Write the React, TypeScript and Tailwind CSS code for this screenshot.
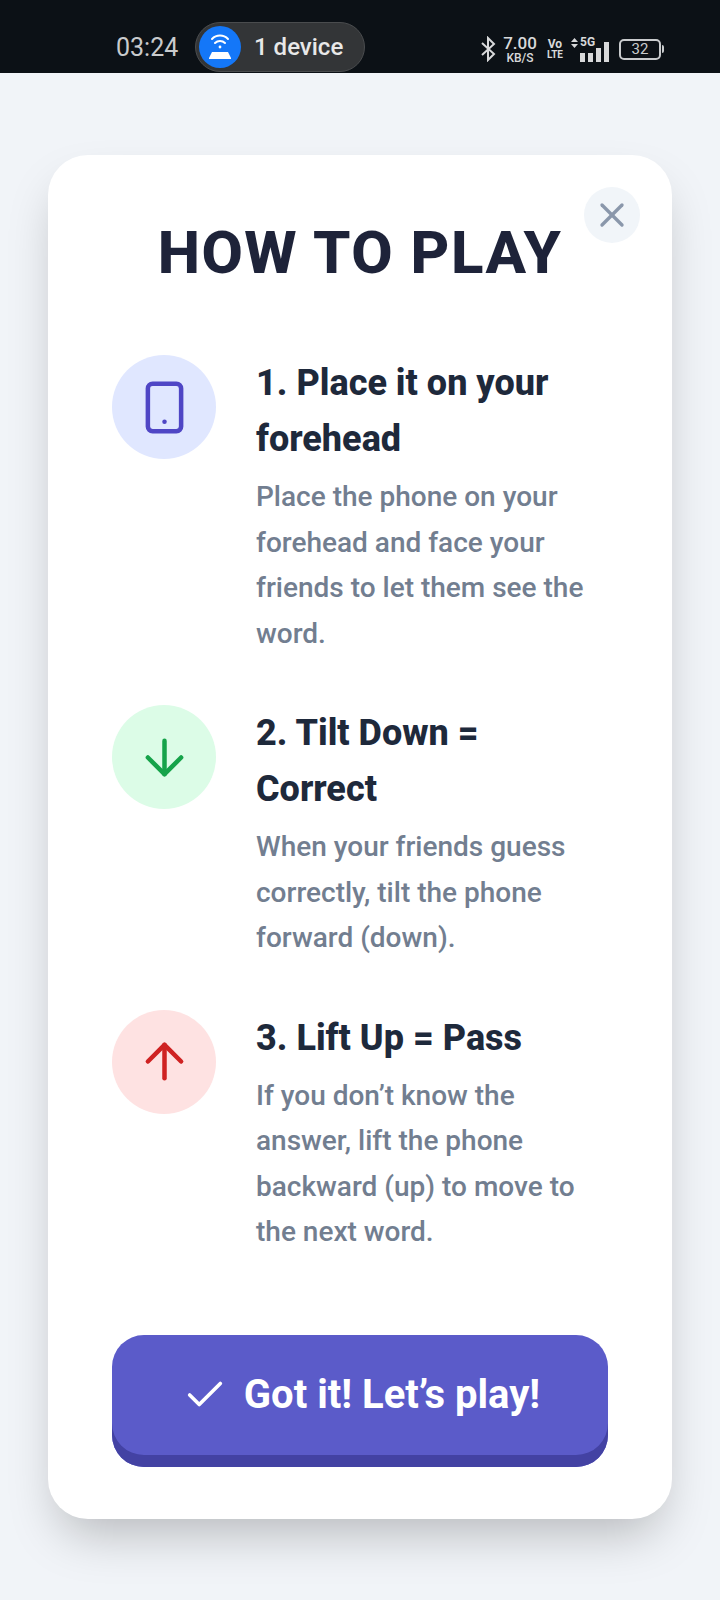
import React from "react";
import { ArrowDown, ArrowUp, Check, Smartphone, X } from "lucide-react";

const steps = [
  {
    title: "1. Place it on your forehead",
    body: "Place the phone on your forehead and face your friends to let them see the word.",
    circle: "bg-[#e0e7ff]",
    icon: <Smartphone size={57} strokeWidth={1.9} className="text-[#4f46c5]" />,
  },
  {
    title: "2. Tilt Down = Correct",
    body: "When your friends guess correctly, tilt the phone forward (down).",
    circle: "bg-[#dcfce7]",
    icon: <ArrowDown size={57} strokeWidth={1.9} className="text-[#16a34a]" />,
  },
  {
    title: "3. Lift Up = Pass",
    body: "If you don’t know the answer, lift the phone backward (up) to move to the next word.",
    circle: "bg-[#fee2e2]",
    icon: <ArrowUp size={57} strokeWidth={1.9} className="text-[#cf2222]" />,
  },
];

const StatusBar = () => (
  <div className="h-[73px] bg-[#0c1116] flex items-end pb-[1px] pl-[116px] pr-[56px] font-['Roboto',sans-serif]">
    <span className="text-[25px] leading-[30px] text-[#c9cbcd] w-[80px] mb-[9px]">03:24</span>
    <div className="flex items-center w-[170px] h-[50px] rounded-full bg-[#333537] border border-[#4a4c4e] pl-[3px] -ml-[1px]">
      <div className="w-[42px] h-[42px] rounded-full bg-[#1477f8] flex items-center justify-center">
        <svg width="28" height="30" viewBox="0 0 28 30" fill="none" stroke="white" strokeLinecap="round">
          <path d="M6 7a11 11 0 0 1 16 0" strokeWidth="2" />
          <path d="M9 11a7 7 0 0 1 10 0" strokeWidth="2" />
          <circle cx="14" cy="15" r="1.4" fill="white" stroke="none" />
          <path d="M6 20h16l3 6v1H3v-1z" fill="white" stroke="none" />
        </svg>
      </div>
      <span className="ml-[13px] text-[24px] font-medium text-[#e8e8e8]">1 device</span>
    </div>
    <div className="flex items-center ml-auto h-[40px] text-[#d8d9da] mb-[3px]">
      <svg width="16" height="26" viewBox="0 0 16 26" fill="none" stroke="currentColor" strokeWidth="2">
        <path d="M2 7l12 11-6 6V2l6 6L2 19" />
      </svg>
      <div className="flex flex-col items-center ml-[7px] font-medium leading-none">
        <span className="text-[17px] leading-[17px]">7.00</span>
        <span className="text-[12px] leading-[12px]">KB/S</span>
      </div>
      <div className="flex flex-col items-center ml-[10px] font-bold leading-none">
        <span className="text-[12px] leading-[12px]">Vo</span>
        <span className="text-[10px] leading-[10px]">LTE</span>
      </div>
      <div className="relative ml-[8px] w-[42px] h-[26px]">
        <svg className="absolute left-0 top-[2px]" width="7" height="10" viewBox="0 0 7 10" fill="currentColor">
          <path d="M3.5 0L7 4H0zM0 6h7L3.5 10z" />
        </svg>
        <span className="absolute left-[9px] top-0 text-[12px] leading-[13px] font-bold">5G</span>
        <div className="absolute left-[9px] bottom-0 flex items-end gap-[3px]">
          <div className="w-[5px] h-[9px] bg-[#d8d9da]" />
          <div className="w-[5px] h-[9px] bg-[#d8d9da]" />
          <div className="w-[5px] h-[14px] bg-[#d8d9da]" />
          <div className="w-[5px] h-[20px] bg-[#d8d9da]" />
        </div>
      </div>
      <div className="ml-[6px] w-[42px] h-[21px] rounded-[5px] border-2 border-[#c9cbcd] flex items-center justify-center">
        <span className="text-[15px] leading-none text-[#c9cbcd]">32</span>
      </div>
      <div className="w-[2px] h-[8px] ml-[1px] bg-[#c9cbcd] rounded-r" />
    </div>
  </div>
);

export default function App() {
  return (
    <div className="w-[720px] h-[1600px] bg-[#f1f4f8] font-['Roboto',sans-serif] overflow-hidden">
      <StatusBar />
      <div className="px-[48px] pt-[82px]">
        <div className="relative bg-white rounded-[40px] h-[1364px] px-[64px] pt-[60px] shadow-[0_25px_50px_-12px_rgba(0,0,0,0.25)]">
          <button className="absolute right-[32px] top-[32px] w-[56px] h-[56px] rounded-full bg-[#f1f5f9] flex items-center justify-center text-[#8a97ab]">
            <X size={40} strokeWidth={2} />
          </button>
          <h1 className="text-center text-[60px] leading-[76px] font-extrabold tracking-[1.5px] text-[#1e2339]">
            HOW TO PLAY
          </h1>
          <div className="flex flex-col gap-[49px] mt-[64px]">
            {steps.map((step) => (
              <div key={step.title} className="flex gap-[40px]">
                <div className={`w-[104px] h-[104px] rounded-full shrink-0 flex items-center justify-center ${step.circle}`}>
                  {step.icon}
                </div>
                <div className="flex-1 pr-[8px]">
                  <h2 className="text-[36px] leading-[56px] font-extrabold text-[#1e293b]">{step.title}</h2>
                  <p className="text-[28px] leading-[45.5px] font-medium text-[#727e90] mt-[7px]">{step.body}</p>
                </div>
              </div>
            ))}
          </div>
          <button className="mt-[80px] w-full h-[132px] rounded-[32px] bg-[#5b5bc9] shadow-[inset_0_-12px_0_#4342a3] pb-[12px] pl-[2px] flex items-center justify-center gap-[16px] text-white">
            <Check size={46} strokeWidth={1.9} />
            <span className="text-[40px] font-bold leading-none">Got it! Let’s play!</span>
          </button>
        </div>
      </div>
    </div>
  );
}
